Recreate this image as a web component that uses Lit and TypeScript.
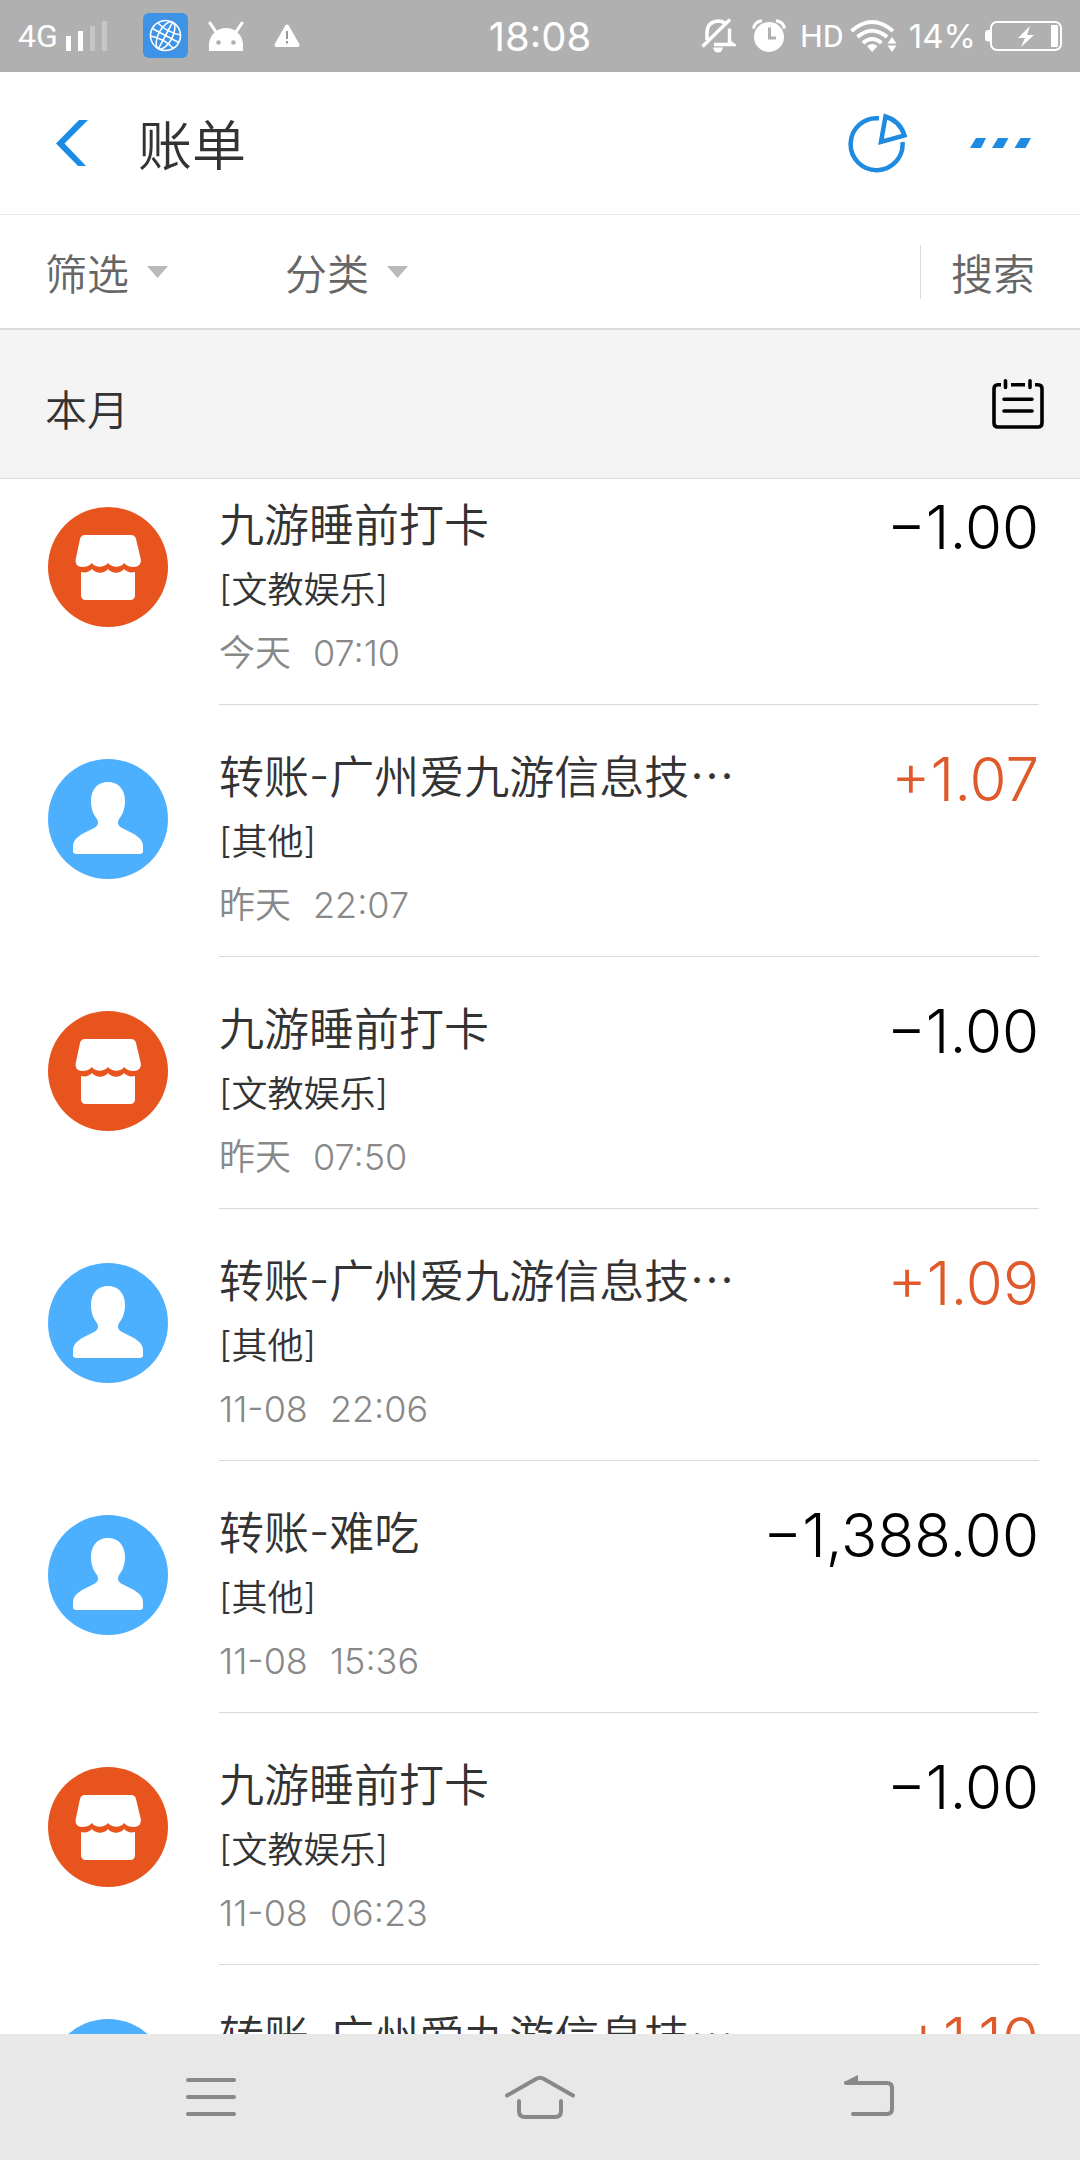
import { LitElement, html, css, svg } from "lit";
import { customElement, property } from "lit/decorators.js";

type Kind = "shop" | "person";

interface Bill {
  kind: Kind;
  title: string;
  more?: boolean;
  category: string;
  day: string;
  time: string;
  amount: string;
}

const BILLS: Bill[] = [
  { kind: "shop", title: "九游睡前打卡", category: "文教娱乐", day: "今天", time: "07:10", amount: "−1.00" },
  { kind: "person", title: "转账-广州爱九游信息技", more: true, category: "其他", day: "昨天", time: "22:07", amount: "+1.07" },
  { kind: "shop", title: "九游睡前打卡", category: "文教娱乐", day: "昨天", time: "07:50", amount: "−1.00" },
  { kind: "person", title: "转账-广州爱九游信息技", more: true, category: "其他", day: "11-08", time: "22:06", amount: "+1.09" },
  { kind: "person", title: "转账-难吃", category: "其他", day: "11-08", time: "15:36", amount: "−1,388.00" },
  { kind: "shop", title: "九游睡前打卡", category: "文教娱乐", day: "11-08", time: "06:23", amount: "−1.00" },
  { kind: "person", title: "转账-广州爱九游信息技", more: true, category: "其他", day: "11-08", time: "06:22", amount: "+1.10" },
];

const shopShape = svg`
  <circle cx="60" cy="60" r="60" fill="#e8541e"/>
  <path fill="#fff" d="M37 28H83Q87 28 88 32L92.500 51C94 56 91 60 86 60C82 60 79 59 76 56C73 61 64 61 60 56C56 61 47 61 44 56C41 59 38 60 34 60C29 60 26.500 56 28 51L32 32Q33 28 37 28Z"/>
  <path fill="#fff" d="M33 65C38 66 41 65 44 62C48 67 56 67 60 62C64 67 72 67 76 62C79 65 82 66 87 65V88Q87 93 82 93H38Q33 93 33 88Z"/>`;

const personShape = svg`
  <circle cx="60" cy="60" r="60" fill="#4db0ff"/>
  <path fill="#fff" d="M60 23C71 23 77 31 77 42C77 51 74 56 71 60C69 64 70 67 74 69L86 75C92 79 95 82 95 88V92Q95 95 92 95H28Q25 95 25 92V88C25 82 28 79 34 75L46 69C50 67 51 64 49 60C46 56 43 51 43 42C43 31 49 23 60 23Z"/>`;

const FONT = css`
  :host {
    font-family: Inter, "Noto Sans CJK SC", sans-serif;
    font-weight: 350;
    box-sizing: border-box;
  }
  svg {
    display: block;
    flex: none;
  }
  button {
    display: flex;
    align-items: center;
    margin: 0;
    padding: 0;
    border: 0;
    background: none;
    color: inherit;
    font: inherit;
    cursor: pointer;
  }
`;

@customElement("status-bar")
class StatusBar extends LitElement {
  static styles = [
    FONT,
    css`
      :host {
        display: grid;
        grid-template-columns: 1fr auto 1fr;
        align-items: center;
        height: 72px;
        padding: 0 18px 0 18px;
        background: #b0b0b0;
        color: #fff;
        font-weight: 400;
      }
      .side {
        display: flex;
        align-items: center;
      }
      .end {
        justify-content: flex-end;
      }
      .net,
      .hd {
        font-family: Roboto, sans-serif;
        font-size: 32px;
      }
      .hd {
        margin-left: 14px;
      }
      .signal {
        margin-left: 8px;
      }
      .globe {
        margin-left: 35px;
      }
      .droid {
        margin-left: 20px;
      }
      .warn {
        margin-left: 30px;
      }
      .clock {
        font-size: 40px;
      }
      .alarm {
        margin-left: 16px;
      }
      .wifi {
        margin-left: 6px;
      }
      .pct {
        font-size: 33px;
        margin-left: 12px;
      }
      .battery {
        margin-left: 9px;
      }
    `,
  ];

  render() {
    return html`
      <div class="side">
        <span class="net">4G</span>
        <svg class="signal" width="42" height="30" viewBox="0 0 42 30" fill="#fff" aria-hidden="true">
          <rect x="0" y="15" width="5" height="15"/>
          <rect x="12" y="10" width="5" height="20"/>
          <rect x="24" y="5" width="5" height="25" opacity=".28"/>
          <rect x="36" y="0" width="5" height="30" opacity=".28"/>
        </svg>
        <svg class="globe" width="45" height="46" viewBox="0 0 45 46" aria-hidden="true">
          <rect width="45" height="45" rx="6" fill="#3f93e6"/>
          <g fill="none" stroke="#fff" stroke-width="1.600" transform="rotate(28 22.500 22.500)">
            <circle cx="22.500" cy="22.500" r="15"/>
            <ellipse cx="22.500" cy="22.500" rx="7" ry="15"/>
            <path d="M22.500 7.500V37.500M7.500 22.500H37.500M9.500 15Q22.500 19 35.500 15M9.500 30Q22.500 26 35.500 30"/>
          </g>
        </svg>
        <svg class="droid" width="36" height="30" viewBox="0 0 36 30" aria-hidden="true">
          <path d="M2 2L8 11M34 2L28 11" stroke="#fff" stroke-width="3" stroke-linecap="round"/>
          <path d="M1 30V24A17 17 0 0 1 35 24V30Z" fill="#fff"/>
          <circle cx="10.500" cy="21.500" r="2.300" fill="#b0b0b0"/>
          <circle cx="25.500" cy="21.500" r="2.300" fill="#b0b0b0"/>
        </svg>
        <svg class="warn" width="26" height="24" viewBox="0 0 26 24" aria-hidden="true">
          <path d="M13 2.500L23.500 21H2.500Z" fill="#fff" stroke="#fff" stroke-width="4" stroke-linejoin="round"/>
          <path d="M13 7V15M13 17V19.500" stroke="#999" stroke-width="2"/>
        </svg>
      </div>
      <time class="clock">18:08</time>
      <div class="side end">
        <svg width="35" height="36" viewBox="0 0 35 36" fill="none" stroke="#fff" aria-hidden="true">
          <path d="M6 22V15Q6 4 17 3Q21 3 24 5" stroke-width="3.600"/>
          <path d="M28.500 10.500V24L32 26.500H13" stroke-width="3.400"/>
          <path d="M1.500 28.500L29 1.500" stroke-width="3.400"/>
          <path d="M12 29.500H22Q21 34.500 17 34.500Q13 34.500 12 29.500Z" fill="#fff" stroke="none"/>
        </svg>
        <svg class="alarm" width="34" height="34" viewBox="0 0 34 34" fill="none" stroke="#fff" aria-hidden="true">
          <circle cx="17" cy="18" r="15" fill="#fff" stroke="none"/>
          <path d="M1.500 9.500Q3 2.500 10 1.800M32.500 9.500Q31 2.500 24 1.800" stroke-width="3"/>
          <path d="M17.500 8.500V19H24" stroke="#b0b0b0" stroke-width="3"/>
        </svg>
        <span class="hd">HD</span>
        <svg class="wifi" width="47" height="34" viewBox="0 0 47 34" fill="none" stroke="#fff" aria-hidden="true">
          <path d="M1.500 12Q22 -6 43 12M7.500 18Q22 5.500 37 18M13 24Q22 16 31.500 24" stroke-width="4"/>
          <path d="M17 27Q22 23 27.500 27L22.200 33Z" fill="#fff" stroke="none"/>
          <path d="M42 18L46.500 24.500H37.500ZM42 33L37.500 26.500H46.500Z" fill="#fff" stroke="none"/>
        </svg>
        <span class="pct">14%</span>
        <svg class="battery" width="77" height="32" viewBox="0 0 77 32" aria-hidden="true">
          <path d="M5 10V21.500H3Q0 21.500 0 18V14Q0 10 3 10Z" fill="#fff"/>
          <rect x="6" y="2" width="70" height="28" rx="6" fill="none" stroke="#fff" stroke-width="2"/>
          <path d="M45 6L33 18H40L36 27L49 15H42Z" fill="#fff"/>
          <rect x="66" y="5" width="7" height="22" rx="1" fill="#fff"/>
        </svg>
      </div>
    `;
  }
}

@customElement("bill-row")
class BillRow extends LitElement {
  @property({ attribute: false }) bill!: Bill;

  static styles = [
    FONT,
    css`
      :host {
        display: grid;
        grid-template-columns: 120px 1fr;
        column-gap: 51px;
        padding: 0 41px 0 48px;
      }
      .icon {
        margin-top: 54px;
      }
      .body {
        display: grid;
        grid-template-columns: 1fr auto;
        column-gap: 24px;
        align-content: start;
        padding: 41px 0 20px;
        border-bottom: 1px solid #dadada;
        font-size: 36px;
        line-height: 64px;
        color: #333;
        font-feature-settings: "case";
      }
      .title {
        font-size: 45px;
        white-space: nowrap;
      }
      .dots {
        font-family: "Noto Sans CJK SC", sans-serif;
        line-height: 1;
      }
      .amount {
        padding-top: 3px;
        font-size: 60px;
        line-height: 60px;
        color: #000;
        white-space: nowrap;
      }
      .income {
        color: #e0592a;
      }
      .category,
      .when {
        grid-column: 1 / -1;
      }
      .when {
        display: flex;
        gap: 22px;
        line-height: 62px;
        color: #888;
      }
    `,
  ];

  render() {
    const b = this.bill;
    const income = b.amount.startsWith("+");
    return html`
      <svg class="icon" width="120" height="120" viewBox="0 0 120 120" aria-hidden="true">
        ${b.kind === "shop" ? shopShape : personShape}
      </svg>
      <div class="body">
        <div class="title">${b.title}${b.more ? html`<span class="dots">…</span>` : null}</div>
        <div class=${income ? "amount income" : "amount"}>${b.amount}</div>
        <div class="category">[${b.category}]</div>
        <div class="when"><span>${b.day}</span><span>${b.time}</span></div>
      </div>
    `;
  }
}

@customElement("app-root")
class AppRoot extends LitElement {
  static styles = [
    FONT,
    css`
      :host {
        display: flex;
        flex-direction: column;
        height: 100vh;
        overflow: hidden;
        background: #fff;
        color: #333;
      }
      status-bar,
      .header,
      .filters,
      .month,
      .nav {
        flex: none;
      }
      .header {
        display: flex;
        align-items: center;
        height: 142px;
        padding: 0 48px 0 54px;
        border-bottom: 1px solid #e8e8e8;
      }
      .heading {
        flex: 1;
        margin: 0 0 0 48px;
        padding-bottom: 2px;
        font-size: 54px;
        font-weight: 350;
      }
      .chart {
        margin-right: 62px;
      }
      .filters {
        display: flex;
        align-items: center;
        height: 113px;
        padding: 0 45px;
        border-bottom: 2px solid #dcdcdc;
        font-size: 42px;
        color: #666;
      }
      .filter {
        gap: 18px;
        margin-right: 117px;
      }
      .search {
        margin-left: auto;
        padding-left: 30px;
        height: 54px;
        border-left: 1px solid #ddd;
      }
      .month {
        display: flex;
        align-items: center;
        justify-content: space-between;
        height: 148px;
        padding: 0 36px 0 45px;
        border-bottom: 1px solid #dcdcdc;
        background: #f4f4f4;
      }
      .label {
        margin: 0;
        padding-top: 6px;
        font-size: 42px;
        font-weight: 350;
      }
      .list {
        flex: 1;
        min-height: 0;
        overflow: hidden;
        display: flex;
        flex-direction: column;
        margin: 0;
        padding: 0;
        list-style: none;
      }
      .item {
        flex: none;
      }
      .item:first-child {
        margin-top: -26px;
      }
      .nav {
        display: grid;
        grid-template-columns: repeat(3, 1fr);
        height: 126px;
        padding: 0 46px;
        background: #e8e8e8;
      }
      .key {
        justify-content: center;
      }
    `,
  ];

  private filter(name: string) {
    return html`
      <button class="filter">
        ${name}
        <svg width="21" height="12" viewBox="0 0 21 12" aria-hidden="true"><path d="M0 0H21L10.500 12Z" fill="#b9b9b9"/></svg>
      </button>
    `;
  }

  render() {
    return html`
      <status-bar></status-bar>
      <header class="header">
        <button aria-label="返回">
          <svg width="36" height="48" viewBox="0 0 36 48" aria-hidden="true">
            <path d="M25 1H34L10.500 24.500L32 47H24L2 24.500Z" fill="#1a8ce6"/>
          </svg>
        </button>
        <h1 class="heading">账单</h1>
        <button class="chart" aria-label="统计">
          <svg width="60" height="60" viewBox="0 0 60 60" fill="none" stroke="#1f8be0" stroke-width="4.500" aria-hidden="true">
            <path d="M31 5.300A26 26 0 1 0 54.500 29"/>
            <path d="M37.500 3.500L33 29L56.500 22.500Q52 8 37.500 3.500Z"/>
          </svg>
        </button>
        <button aria-label="更多">
          <svg width="62" height="12" viewBox="0 0 62 12" fill="#1f8be0" aria-hidden="true">
            <path d="M6 1H16L11 11H0ZM28 1H38.500L33 11H22ZM50.500 1H61L55.500 11H44.500Z"/>
          </svg>
        </button>
      </header>
      <div class="filters">
        ${this.filter("筛选")} ${this.filter("分类")}
        <button class="search">搜索</button>
      </div>
      <div class="month">
        <h2 class="label">本月</h2>
        <button aria-label="选择月份">
          <svg width="52" height="50" viewBox="0 0 52 50" fill="none" stroke="#000" stroke-width="3.600" aria-hidden="true">
            <path d="M9 5.800H6Q2 5.800 2 9.800V44Q2 48 6 48H46Q50 48 50 44V9.800Q50 5.800 46 5.800H43M19 5.800H33"/>
            <path d="M13.500 1.800V8.500M38 1.800V8.500M12 20.200H40M12 32H40" stroke-linecap="round"/>
          </svg>
        </button>
      </div>
      <ul class="list">
        ${BILLS.map((b) => html`<li class="item"><bill-row .bill=${b}></bill-row></li>`)}
      </ul>
      <nav class="nav">
        <button class="key" aria-label="菜单">
          <svg width="50" height="44" viewBox="0 0 50 44" stroke="#888" stroke-width="4" stroke-linecap="round" aria-hidden="true">
            <path d="M2 5H48M2 22H48M2 39H48"/>
          </svg>
        </button>
        <button class="key" aria-label="主页">
          <svg width="72" height="44" viewBox="0 0 72 44" fill="none" stroke="#888" stroke-width="4" stroke-linecap="round" aria-hidden="true">
            <path d="M3 20.500L32 4Q36 1.500 40 4L69 20.500M15 26V36Q15 42 21 42H51Q57 42 57 36V26"/>
          </svg>
        </button>
        <button class="key" aria-label="后退">
          <svg width="52" height="44" viewBox="0 0 52 44" fill="none" stroke="#888" stroke-width="4" stroke-linecap="round" aria-hidden="true">
            <path d="M3 8H44Q49 8 49 13V34Q49 39 44 39H10"/>
            <path d="M1 7L15 0V9H2Z" fill="#888" stroke="none"/>
          </svg>
        </button>
      </nav>
    `;
  }
}
